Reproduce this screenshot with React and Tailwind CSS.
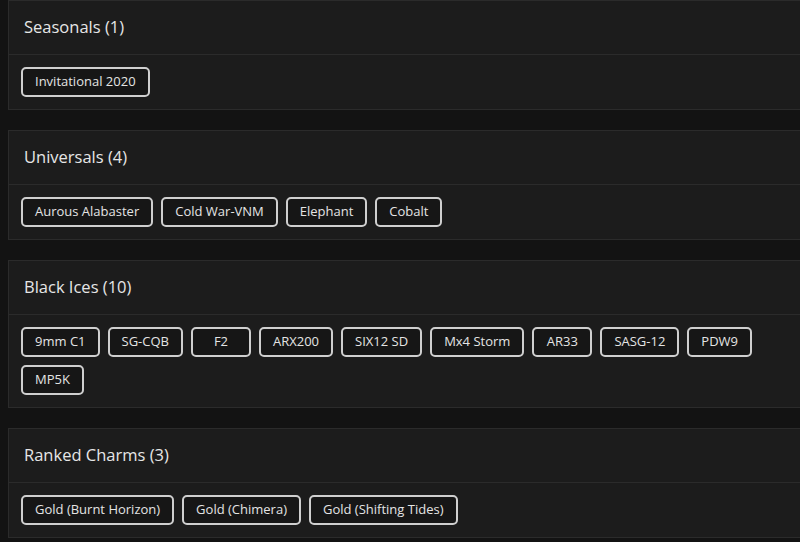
const SECTIONS = [
  { title: 'Seasonals', items: ['Invitational 2020'] },
  { title: 'Universals', items: ['Aurous Alabaster', 'Cold War-VNM', 'Elephant', 'Cobalt'] },
  {
    title: 'Black Ices',
    items: ['9mm C1', 'SG-CQB', 'F2', 'ARX200', 'SIX12 SD', 'Mx4 Storm', 'AR33', 'SASG-12', 'PDW9', 'MP5K'],
  },
  { title: 'Ranked Charms', items: ['Gold (Burnt Horizon)', 'Gold (Chimera)', 'Gold (Shifting Tides)'] },
]

function Chip({ label }) {
  return (
    <span className="h-[30px] min-w-[60px] px-3 flex items-center justify-center rounded-[5px] border-2 border-[#cfcfcf] bg-[#161616] text-[13px] text-[#e4e4e4] whitespace-nowrap">
      {label}
    </span>
  )
}

function Section({ title, items }) {
  return (
    <div className="border border-[#2b2b2b] bg-[#1c1c1c]">
      <div className="h-[54px] px-[15px] flex items-center border-b border-[#2b2b2b]">
        <h2 className="text-[16.5px] font-medium text-[#e6e6e6]">
          {title} ({items.length})
        </h2>
      </div>
      <div className="p-3 flex flex-wrap gap-2 max-w-[780px]">
        {items.map((it) => (
          <Chip key={it} label={it} />
        ))}
      </div>
    </div>
  )
}

export default function App() {
  return (
    <div
      className="w-[800px] h-[542px] overflow-hidden bg-[#131313]"
      style={{ fontFamily: '"Open Sans", "Liberation Sans", sans-serif' }}
    >
      <div className="w-[830px] pl-2 flex flex-col gap-5">
        {SECTIONS.map((s) => (
          <Section key={s.title} title={s.title} items={s.items} />
        ))}
      </div>
    </div>
  )
}
